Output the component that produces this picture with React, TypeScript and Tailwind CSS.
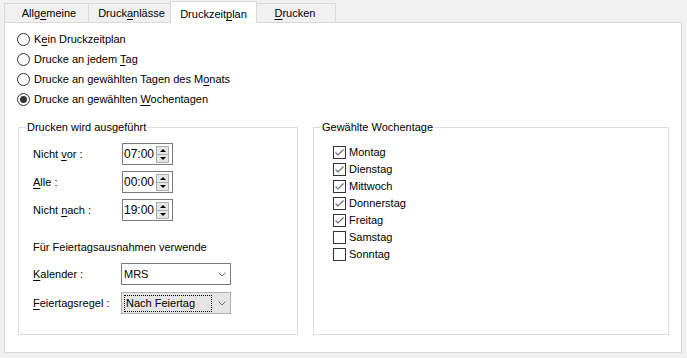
import React from "react";

const font = { fontFamily: '"Liberation Sans", Arial, sans-serif' };

function U({ children }: { children: React.ReactNode }) {
  return <span className="underline underline-offset-[2px]">{children}</span>;
}

function Radio({ checked, children }: { checked?: boolean; children: React.ReactNode }) {
  return (
    <div className="flex h-[20px] items-center">
      <div className="flex h-[13px] w-[13px] items-center justify-center rounded-full border border-[#333] bg-white">
        {checked && <div className="h-[7px] w-[7px] rounded-full bg-[#333]" />}
      </div>
      <span className="ml-[4px]">{children}</span>
    </div>
  );
}

function Check({ checked, children }: { checked?: boolean; children: React.ReactNode }) {
  return (
    <div className="flex h-[17px] items-center">
      <div className="flex h-[13px] w-[13px] items-center justify-center border border-[#333] bg-white">
        {checked && (
          <svg width="11" height="11" viewBox="0 0 11 11">
            <path d="M1.5 5.5 L4 8 L9.5 2.5" fill="none" stroke="#6b6b6b" strokeWidth="1.1" />
          </svg>
        )}
      </div>
      <span className="ml-[3px]">{children}</span>
    </div>
  );
}

function Spin({ value }: { value: string }) {
  return (
    <div className="flex h-[22px] w-[51px] items-center border border-[#7a7a7a] bg-white pl-px pr-[3px]">
      <span className="flex-1 text-[12px]">{value}</span>
      <div className="flex h-[17px] w-[13px] flex-col">
        <div className="flex h-[9px] items-center justify-center border border-[#acacac] bg-[#e6e6e6]">
          <div className="h-0 w-0 border-x-[3px] border-b-[3px] border-x-transparent border-b-black" />
        </div>
        <div className="-mt-px flex h-[9px] items-center justify-center border border-[#acacac] bg-[#e6e6e6]">
          <div className="h-0 w-0 border-x-[3px] border-t-[3px] border-x-transparent border-t-black" />
        </div>
      </div>
    </div>
  );
}

function Chevron() {
  return (
    <svg width="8" height="5" viewBox="0 0 8 5">
      <path d="M0.5 0.5 L4 4 L7.5 0.5" fill="none" stroke="#707070" strokeWidth="1" />
    </svg>
  );
}

function Group({ label, className, children }: { label: string; className: string; children: React.ReactNode }) {
  return (
    <div className={"relative h-[208px] border border-[#dcdcdc] " + className}>
      <span className="absolute -top-[8px] left-[7px] bg-white px-px leading-[14px]">{label}</span>
      {children}
    </div>
  );
}

export default function App() {
  return (
    <div className="h-[358px] w-[687px] overflow-hidden bg-[#f0f0f0] text-[11px] text-black" style={font}>
      {/* Tabs */}
      <div className="flex h-[22px] items-end pl-[4px]">
        <div className="flex h-[19px] w-[84px] items-center justify-center border-l border-t border-[#d9d9d9] pl-[5px] pt-px">
          Allg<U>e</U>meine
        </div>
        <div className="flex h-[19px] w-[82px] items-center justify-center border-l border-t border-[#d9d9d9] pl-[4px] pt-px">
          Druck<U>a</U>nlässe
        </div>
        <div className="relative z-10 -mb-px flex h-[22px] w-[87px] items-start justify-center border-x border-t border-[#d9d9d9] bg-white pt-[4px]">
          Druckzeit<U>p</U>lan
        </div>
        <div className="flex h-[19px] w-[79px] items-center justify-center border-r border-t border-[#d9d9d9] pr-[2px] pt-px">
          <U>D</U>rucken
        </div>
      </div>

      {/* Panel */}
      <div className="ml-[4px] h-[331px] w-[678px] border border-[#d9d9d9] bg-white">
        <div className="flex flex-col pl-[12px] pt-[6px]">
          <Radio>K<U>e</U>in Druckzeitplan</Radio>
          <Radio>Drucke an jedem <U>T</U>ag</Radio>
          <Radio>Drucke an gewählten Tagen des M<U>o</U>nats</Radio>
          <Radio checked>Drucke an gewählten <U>W</U>ochentagen</Radio>
        </div>

        <div className="mt-[18px] flex gap-[15px] pl-[13px]">
          <Group label="Drucken wird ausgeführt" className="w-[280px]">
            <div className="flex flex-col pl-[14px] pt-[15px]">
              <div className="flex flex-col gap-[6px]">
                <div className="flex h-[22px] items-center">
                  <span className="w-[89px]">Nicht <U>v</U>or :</span>
                  <Spin value="07:00" />
                </div>
                <div className="flex h-[22px] items-center">
                  <span className="w-[89px]"><U>A</U>lle :</span>
                  <Spin value="00:00" />
                </div>
                <div className="flex h-[22px] items-center">
                  <span className="w-[89px]">Nicht <U>n</U>ach :</span>
                  <Spin value="19:00" />
                </div>
              </div>
              <div className="mt-[16px] flex h-[20px] items-center">Für Feiertagsausnahmen verwende</div>
              <div className="mt-[6px] flex h-[22px] items-center">
                <span className="w-[88px]"><U>K</U>alender :</span>
                <div className="flex h-[22px] w-[110px] items-center justify-between border border-[#7a7a7a] bg-white pl-[2px] pr-[4px]">
                  <span>MRS</span>
                  <Chevron />
                </div>
              </div>
              <div className="mt-[7px] flex h-[22px] items-center">
                <span className="w-[88px]"><U>F</U>eiertagsregel :</span>
                <div className="flex h-[22px] w-[110px] items-center justify-between border border-[#adadad] bg-[#e5e5e5] pl-[2px] pr-[4px]">
                  <span className="flex h-[17px] w-[88px] items-center border border-dotted border-black pl-px">Nach Feiertag</span>
                  <Chevron />
                </div>
              </div>
            </div>
          </Group>

          <Group label="Gewählte Wochentage" className="w-[356px]">
            <div className="flex flex-col pl-[19px] pt-[16px]">
              <Check checked>Montag</Check>
              <Check checked>Dienstag</Check>
              <Check checked>Mittwoch</Check>
              <Check checked>Donnerstag</Check>
              <Check checked>Freitag</Check>
              <Check>Samstag</Check>
              <Check>Sonntag</Check>
            </div>
          </Group>
        </div>
      </div>
    </div>
  );
}
